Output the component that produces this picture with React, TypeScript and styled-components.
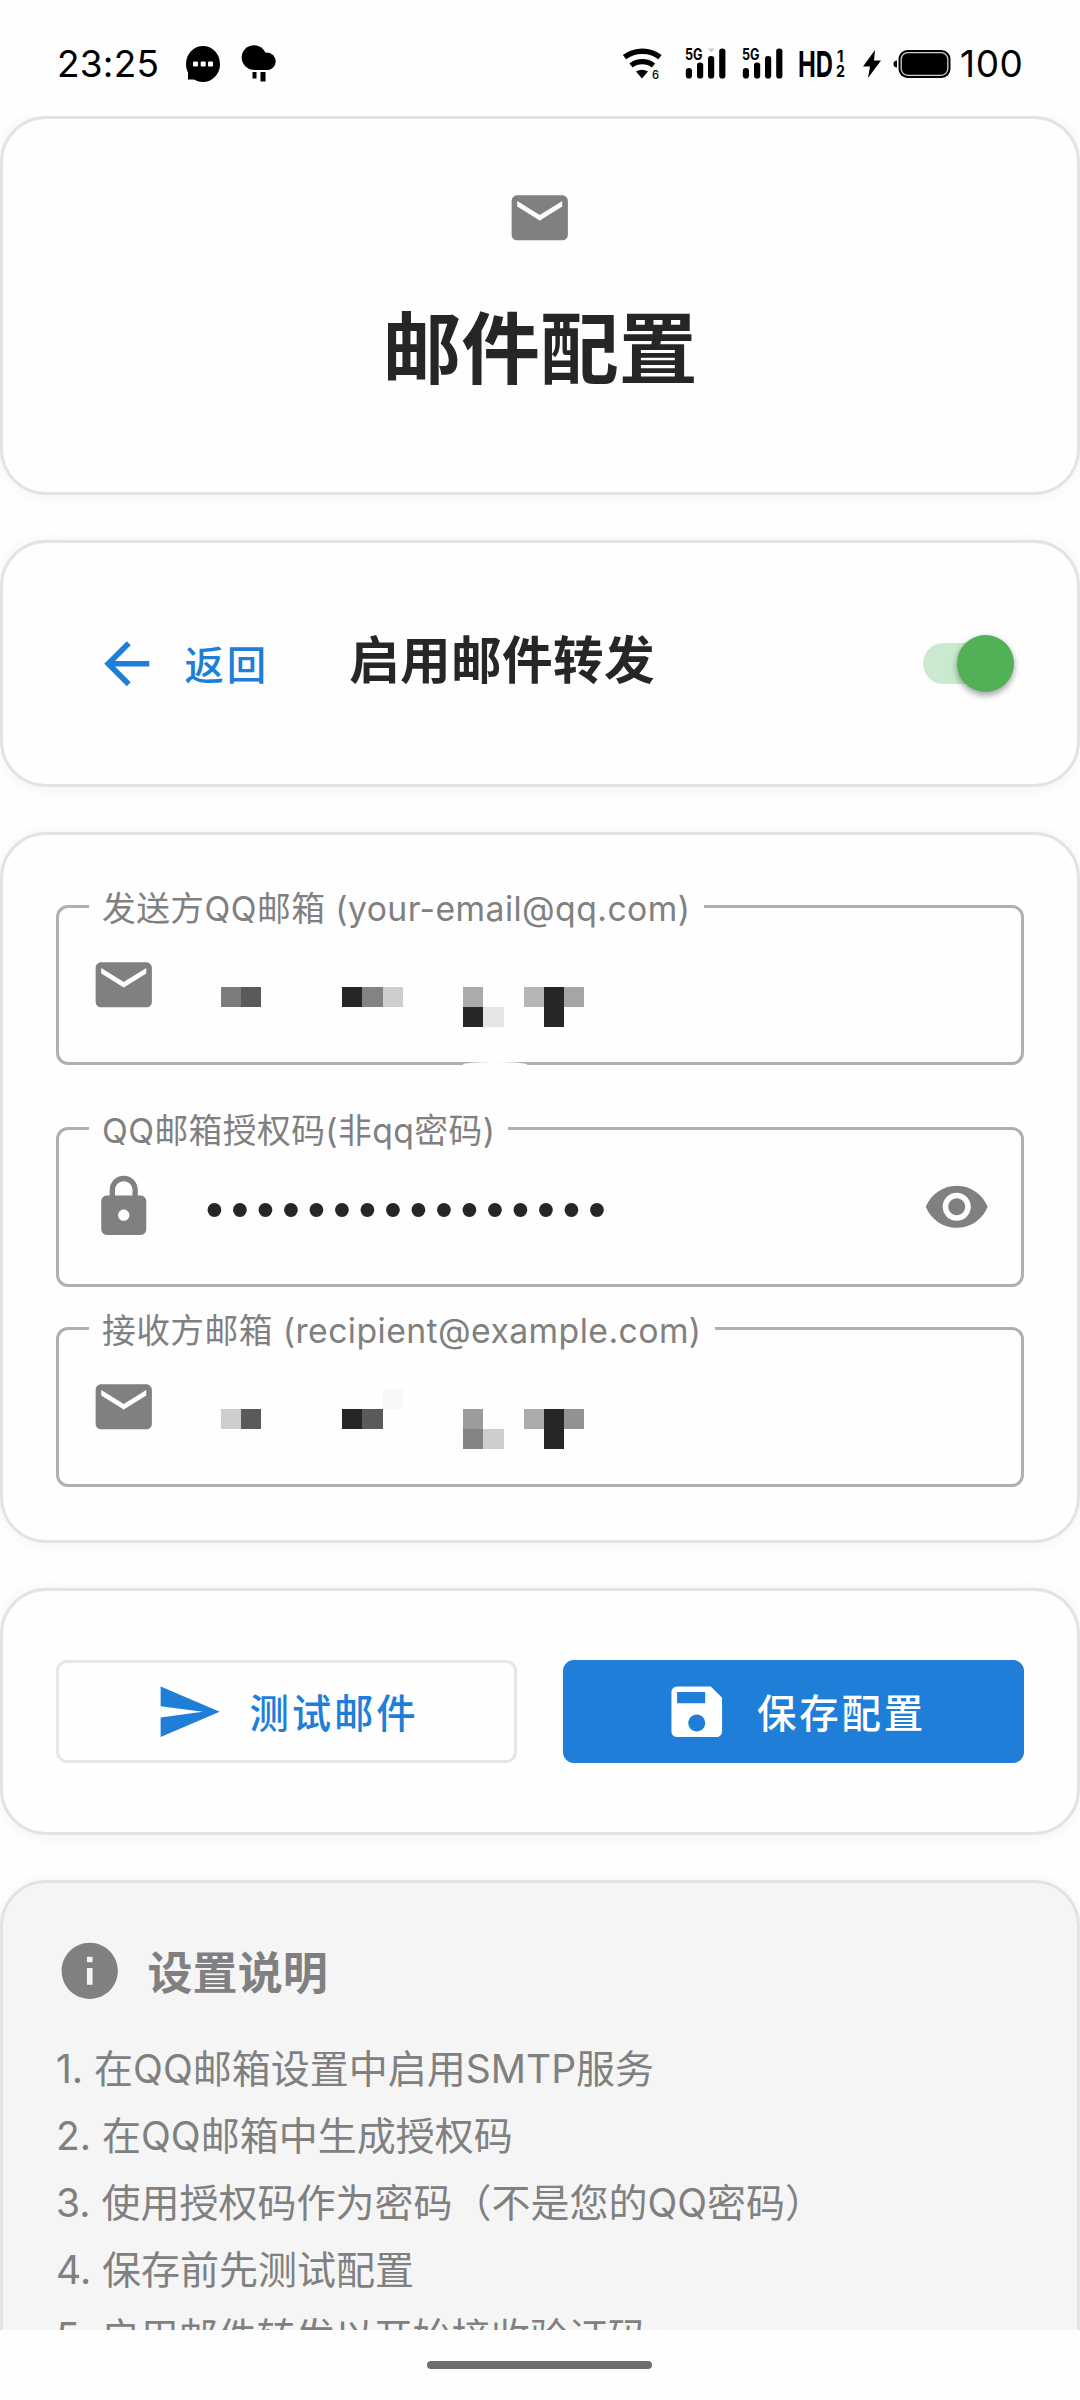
import React from 'react';
import styled, { createGlobalStyle } from 'styled-components';
import {
  MdArrowBack,
  MdEmail,
  MdInfo,
  MdLock,
  MdSave,
  MdSend,
  MdVisibility,
} from 'react-icons/md';

const ink = '#262626';
const muted = '#808080';
const blue = '#1f7ed8';
const line = '#e3e3e3';
const fontStack = "Inter, 'Noto Sans CJK SC', sans-serif";

const GlobalStyle = createGlobalStyle`
  *, *::before, *::after { box-sizing: border-box; }
  body { margin: 0; background: #fff; font-family: ${fontStack}; }
`;

const Screen = styled.div`
  width: 1080px;
  height: 2400px;
  display: flex;
  flex-direction: column;
  overflow: hidden;
  background: #fefefe;
  font-family: ${fontStack};
  color: ${ink};
`;

/* ---------- status bar ---------- */

const StatusBar = styled.header`
  flex: none;
  height: 116px;
  padding: 11px 57px 0 57px;
  display: flex;
  align-items: center;
  justify-content: space-between;
  color: #000;
`;

const StatusGroup = styled.div`
  display: flex;
  align-items: center;
`;

const Clock = styled.span`
  width: 129px;
  font-size: 37px;
  line-height: 46px;
  letter-spacing: 0.2px;
`;

const BatteryText = styled.span`
  width: 63px;
  font-size: 37px;
  line-height: 46px;
  letter-spacing: 0.6px;
  white-space: nowrap;
`;

const Glyph = styled.svg<{ $gap: number }>`
  display: block;
  flex: none;
  overflow: visible;
  margin-right: ${(p) => p.$gap}px;
`;

const ChatIcon = () => (
  <Glyph width={34} height={36} viewBox="0 0 34 36" $gap={22}>
    <ellipse cx="17" cy="18" rx="17" ry="18" />
    <path d="M2 22h10v11.500H2z" />
    <g fill="#fff">
      <rect x="7" y="15.500" width="5" height="5" rx="1" />
      <rect x="14.700" y="15.500" width="5" height="5" rx="1" />
      <rect x="22" y="15.500" width="5" height="5" rx="1" />
    </g>
  </Glyph>
);

const RainIcon = () => (
  <Glyph width={34} height={37} viewBox="0 0 34 37" $gap={0}>
    <circle cx="12" cy="12.500" r="12.300" />
    <circle cx="25" cy="16.300" r="8.700" />
    <rect x="11.500" y="15" width="14" height="10" />
    <rect x="10.500" y="27" width="4" height="6.500" />
    <rect x="18.500" y="27" width="5" height="9.500" />
  </Glyph>
);

const WifiIcon = () => (
  <Glyph width={39} height={32} viewBox="0 0 39 32" $gap={23}>
    <g fill="none" stroke="#000" strokeWidth="5.400">
      <path d="M1.500 9.200C12 1.200 27 1.200 37 9.200" />
      <path d="M8 17.500C14.500 12.300 24 12.300 30.500 17.500" />
    </g>
    <path d="M13 23.500Q19 20 25 23.500L19 30.500z" />
    <text x="29" y="31" fontSize="12" fontWeight="500" textLength="7" lengthAdjust="spacingAndGlyphs" fontFamily="Inter, sans-serif">
      6
    </text>
  </Glyph>
);

const SignalIcon = ({ fading, gap }: { fading?: boolean; gap: number }) => (
  <Glyph width={41} height={31} viewBox="0 0 41 31" $gap={gap}>
    <text
      x="0"
      y="12"
      fontSize="15.500"
      fontWeight="700"
      fontFamily="Inter, sans-serif"
      textLength="17.500"
      lengthAdjust="spacingAndGlyphs"
    >
      5G
    </text>
    <rect x="0.800" y="20" width="6.200" height="10.500" rx="3.100" />
    <rect x="12" y="14.500" width="6.200" height="16" rx="2.800" />
    <rect x="23" y="8" width="6.200" height="22.500" rx="2.800" />
    <rect x="34.200" y="0.500" width="6.200" height="30" rx="2.800" />
    {fading && <path d="M23 0.500h6.500l-3.200 4z" fill="#c9c9c9" />}
  </Glyph>
);

const HdIcon = () => (
  <Glyph width={46} height={30} viewBox="0 0 46 30" $gap={18}>
    <g fontFamily="Inter, sans-serif">
      <text x="-1" y="28" fontSize="36" fontWeight="700" textLength="35" lengthAdjust="spacingAndGlyphs">
        HD
      </text>
      <text x="38" y="12.500" fontSize="15.500" fontWeight="700" textLength="6.500" lengthAdjust="spacingAndGlyphs">
        1
      </text>
      <text x="37" y="28" fontSize="15.500" fontWeight="700" textLength="9" lengthAdjust="spacingAndGlyphs">
        2
      </text>
    </g>
  </Glyph>
);

const BoltIcon = () => (
  <Glyph width={18} height={28} viewBox="0 0 18 28" $gap={13}>
    <path d="M12 0L0 16.500h7L5 28 18 10.500h-7z" />
  </Glyph>
);

const BatteryIcon = () => (
  <Glyph width={57} height={28} viewBox="0 0 57 28" $gap={9}>
    <path d="M3 10.500v7a3.500 3.500 0 0 1 0-7z" />
    <rect x="4.500" width="52" height="28" rx="9" />
    <rect x="7.200" y="2.700" width="46.600" height="22.600" rx="6.500" fill="none" stroke="#cfcfcf" strokeWidth="1.300" />
  </Glyph>
);

/* ---------- cards ---------- */

const Content = styled.main`
  flex: none;
  height: 2214px;
  overflow: hidden;
  display: flex;
  flex-direction: column;
  gap: 45px;
`;

const Card = styled.section<{ $height: number; $tone?: string }>`
  flex: none;
  height: ${(p) => p.$height}px;
  border: 3px solid ${line};
  border-radius: 46px;
  background: ${(p) => p.$tone ?? '#fefefe'};
  box-shadow: 0 1px 14px rgba(0, 0, 0, 0.05);
  padding: 0 53px;
  display: flex;
`;

const HeroCard = styled(Card)`
  flex-direction: column;
  align-items: center;
  padding-top: 65px;
  color: ${muted};
`;

const PageTitle = styled.h1`
  margin: 41px 0 0;
  font-size: 78.75px;
  line-height: 114px;
  font-weight: 700;
  color: ${ink};
`;

const ToggleCard = styled(Card)`
  align-items: center;
`;

const BackButton = styled.button`
  display: flex;
  align-items: center;
  gap: 24px;
  width: 256px;
  margin-left: 37px;
  padding: 0;
  border: 0;
  background: none;
  color: ${blue};
  font: 500 39.4px/58px ${fontStack};
  letter-spacing: 2.8px;
`;

const BackLabel = styled.span`
  padding-top: 4px;
`;

const ToggleTitle = styled.h2`
  flex: 1;
  margin: 0 0 5px;
  font-size: 50.6px;
  line-height: 74px;
  font-weight: 700;
  letter-spacing: 0.4px;
`;

const Track = styled.div`
  width: 91px;
  height: 41px;
  margin-right: 10px;
  border-radius: 21px;
  background: #cbe9cf;
  display: flex;
  align-items: center;
  justify-content: flex-end;
`;

const Thumb = styled.div`
  flex: none;
  width: 57px;
  height: 57px;
  border-radius: 50%;
  background: #52b157;
  box-shadow: 0 4px 6px rgba(0, 0, 0, 0.28), 0 1px 6px rgba(0, 0, 0, 0.12);
`;

/* ---------- form ---------- */

const FormCard = styled(Card)`
  flex-direction: column;
  padding-top: 70px;
`;

const Field = styled.div<{ $after: number }>`
  position: relative;
  flex: none;
  height: 160px;
  margin-bottom: ${(p) => p.$after}px;
  padding: 0 31px;
  border: 3px solid #b0b0b0;
  border-radius: 12px;
  display: flex;
  align-items: center;
  color: ${muted};
`;

const FieldLabel = styled.label`
  position: absolute;
  left: 30px;
  top: -24px;
  padding: 0 13px 0 13px;
  background: #fefefe;
  font-size: 33.75px;
  line-height: 50px;
  letter-spacing: 0.42px;
  white-space: nowrap;
  color: ${muted};
`;

const Smudge = styled.span`
  position: absolute;
  left: 404px;
  bottom: -5px;
  width: 64px;
  height: 5px;
  border-radius: 50% 50% 0 0;
  background: #fefefe;
`;

const Mosaic = styled.div`
  margin: 24px 0 0 63.5px;
  display: grid;
  grid-template-columns: repeat(18, 20.2px);
  grid-template-rows: repeat(3, 20.2px);
`;

const Tile = styled.span<{ $row: number; $col: number; $shade: string }>`
  grid-row: ${(p) => p.$row};
  grid-column: ${(p) => p.$col};
  background: ${(p) => p.$shade};
`;

const Password = styled.span`
  flex: 1;
  margin: 6px 0 0 48px;
  font: 400 51px/60px 'Liberation Sans', sans-serif;
  letter-spacing: 7.64px;
  color: ${ink};
`;

type TileSpec = [number, number, string];

const senderTiles: TileSpec[] = [
  [2, 1, '#7c7c7c'], [2, 2, '#5a5a5a'],
  [2, 7, '#262626'], [2, 8, '#838383'], [2, 9, '#cecece'],
  [2, 13, '#ababab'], [3, 13, '#262626'], [3, 14, '#e5e5e5'],
  [2, 16, '#b5b5b5'], [2, 17, '#262626'], [2, 18, '#a5a5a5'], [3, 17, '#262626'],
];

const recipientTiles: TileSpec[] = [
  [1, 9, '#f7f7f7'],
  [2, 1, '#cecece'], [2, 2, '#5a5a5a'],
  [2, 7, '#262626'], [2, 8, '#5a5a5a'],
  [2, 13, '#9b9b9b'], [3, 13, '#838383'], [3, 14, '#cecece'],
  [2, 16, '#ababab'], [2, 17, '#262626'], [2, 18, '#929292'], [3, 17, '#262626'],
];

const HiddenAddress = ({ tiles }: { tiles: TileSpec[] }) => (
  <Mosaic>
    {tiles.map(([row, col, shade]) => (
      <Tile key={`${row}-${col}`} $row={row} $col={col} $shade={shade} />
    ))}
  </Mosaic>
);

/* ---------- actions ---------- */

const ActionCard = styled(Card)`
  align-items: center;
  gap: 46px;
`;

const ActionButton = styled.button<{ $solid?: boolean }>`
  flex: 1;
  height: 103px;
  margin: 0;
  padding: 0 0 0 ${(p) => (p.$solid ? 2 : 1)}px;
  border: 3px solid ${(p) => (p.$solid ? blue : '#e6e6e6')};
  border-radius: 11px;
  background: ${(p) => (p.$solid ? blue : '#fefefe')};
  color: ${(p) => (p.$solid ? '#fff' : blue)};
  display: flex;
  align-items: center;
  justify-content: center;
  gap: 27px;
  font: 500 39.4px/58px ${fontStack};
  letter-spacing: 2.8px;
`;

const ActionLabel = styled.span`
  padding-top: 5px;
`;

/* ---------- instructions ---------- */

const HelpCard = styled(Card)`
  flex-direction: column;
  padding-top: 54px;
  color: ${muted};
`;

const HelpHeader = styled.div`
  display: flex;
  align-items: center;
  gap: 24px;
  height: 68px;
`;

const HelpTitle = styled.h3`
  margin: 5px 0 0;
  font-size: 45px;
  line-height: 66px;
  font-weight: 700;
  letter-spacing: 0.1px;
`;

const Steps = styled.div`
  margin-top: 30px;
  display: flex;
  flex-direction: column;
`;

const Step = styled.p`
  margin: 0;
  font-size: 39px;
  line-height: 67px;
  white-space: nowrap;
`;

const NavBar = styled.footer`
  flex: 1;
  display: flex;
  justify-content: center;
  padding: 31px 1px 0 0;
  background: #fefefe;
`;

const HomeHandle = styled.div`
  width: 225px;
  height: 8px;
  border-radius: 4px;
  background: #6e6e6e;
`;

const steps = [
  '1. 在QQ邮箱设置中启用SMTP服务',
  '2. 在QQ邮箱中生成授权码',
  '3. 使用授权码作为密码（不是您的QQ密码）',
  '4. 保存前先测试配置',
  '5. 启用邮件转发以开始接收验证码',
];

const ICON = 67.5;

export default function App() {
  return (
    <Screen lang="zh-CN">
      <GlobalStyle />
      <StatusBar>
        <StatusGroup>
          <Clock>23:25</Clock>
          <ChatIcon />
          <RainIcon />
        </StatusGroup>
        <StatusGroup>
          <WifiIcon />
          <SignalIcon fading gap={16} />
          <SignalIcon gap={16} />
          <HdIcon />
          <BoltIcon />
          <BatteryIcon />
          <BatteryText>100</BatteryText>
        </StatusGroup>
      </StatusBar>

      <Content>
        <HeroCard $height={379}>
          <MdEmail size={ICON} />
          <PageTitle>邮件配置</PageTitle>
        </HeroCard>

        <ToggleCard $height={247}>
          <BackButton>
            <MdArrowBack size={ICON} />
            <BackLabel>返回</BackLabel>
          </BackButton>
          <ToggleTitle>启用邮件转发</ToggleTitle>
          <Track>
            <Thumb />
          </Track>
        </ToggleCard>

        <FormCard $height={711}>
          <Field $after={62}>
            <FieldLabel>发送方QQ邮箱 (your-email@qq.com)</FieldLabel>
            <MdEmail size={ICON} />
            <HiddenAddress tiles={senderTiles} />
            <Smudge />
          </Field>
          <Field $after={40}>
            <FieldLabel>QQ邮箱授权码(非qq密码)</FieldLabel>
            <MdLock size={ICON} />
            <Password>••••••••••••••••</Password>
            <MdVisibility size={ICON} />
          </Field>
          <Field $after={0}>
            <FieldLabel>接收方邮箱 (recipient@example.com)</FieldLabel>
            <MdEmail size={ICON} />
            <HiddenAddress tiles={recipientTiles} />
          </Field>
        </FormCard>

        <ActionCard $height={247}>
          <ActionButton>
            <MdSend size={ICON} />
            <ActionLabel>测试邮件</ActionLabel>
          </ActionButton>
          <ActionButton $solid>
            <MdSave size={ICON} />
            <ActionLabel>保存配置</ActionLabel>
          </ActionButton>
        </ActionCard>

        <HelpCard $height={520} $tone="#f5f5f5">
          <HelpHeader>
            <MdInfo size={ICON} />
            <HelpTitle>设置说明</HelpTitle>
          </HelpHeader>
          <Steps>
            {steps.map((step) => (
              <Step key={step}>{step}</Step>
            ))}
          </Steps>
        </HelpCard>
      </Content>

      <NavBar>
        <HomeHandle />
      </NavBar>
    </Screen>
  );
}
